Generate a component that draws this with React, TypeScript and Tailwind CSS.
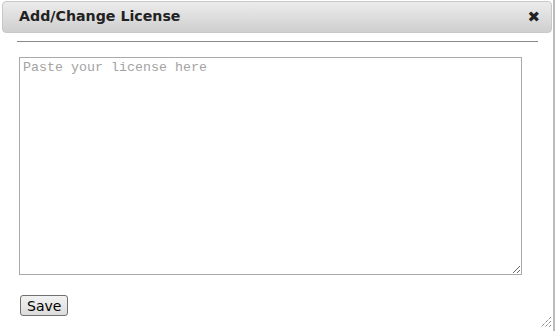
const App = () => {
  return (
    <div className="relative w-[556px] h-[331px] bg-white flex font-['DejaVu_Sans',sans-serif]">
      <div className="w-[553px] h-full flex flex-col pl-[2px] pt-[1px]">
        <div className="shrink-0 h-[32px] w-[550px] flex items-center justify-between pl-[16px] pr-[11px] rounded-[4px] border border-[#c8c8c8] bg-gradient-to-b from-[#ececec] to-[#cfcfcf]">
          <span className="text-[14.2px] font-bold text-[#222]">Add/Change License</span>
          <span className="text-[15px] text-[#222] leading-none">✖</span>
        </div>
        <div className="shrink-0 ml-[15px] mt-[8px] w-[521px] h-[1px] bg-[#888]" />
        <textarea
          className="shrink-0 block ml-[17px] mt-[15px] w-[503px] h-[218px] border border-[#a9a9a9] px-[3px] py-[2px] text-[13.33px] leading-[15px] font-['Liberation_Mono',monospace] placeholder:text-[#a3a3a3] resize"
          placeholder="Paste your license here"
        />
        <div className="shrink-0 ml-[18px] mt-[20px] flex">
          <button className="h-[21px] px-[6px] border border-[#707070] rounded-[3px] bg-gradient-to-b from-[#f2f2f2] to-[#dcdcdc] text-[14px] font-['DejaVu_Sans',sans-serif] text-black leading-none">
            Save
          </button>
        </div>
      </div>
      <div className="w-[2px] h-full bg-[#bbb]" />
      <svg className="absolute right-[4px] bottom-[3px]" width="12" height="12" viewBox="0 0 12 12">
        <path d="M11 1 L1 11 M11 5 L5 11 M11 9 L9 11" stroke="#555" strokeWidth="1" strokeDasharray="1 1" />
      </svg>
    </div>
  );
};

export default App;
